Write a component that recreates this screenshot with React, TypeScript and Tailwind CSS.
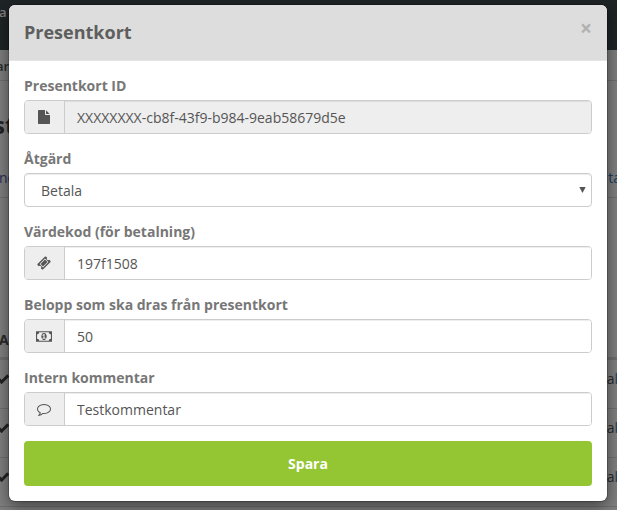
import type { ReactNode } from "react";

interface IconProps {
  d: string;
  viewBox?: string;
  className?: string;
}

interface FieldProps {
  label: string;
  children: ReactNode;
}

interface AddonInputProps {
  icon: ReactNode;
  value: string;
  disabled?: boolean;
}

const FILE =
  "M1152 512v-472q22 14 36 28l408 408q14 14 28 36h-472zm-128 32q0 40 28 68t68 28h544v1056q0 40-28 68t-68 28h-1344q-40 0-68-28t-28-68v-1600q0-40 28-68t68-28h800v544z";
const TICKET =
  "M1024 452l316 316-572 572-316-316zm-211 979l618-618q19-19 19-45t-19-45l-362-362q-18-18-45-18t-45 18l-618 618q-19 19-19 45t19 45l362 362q18 18 45 18t45-18zm889-637l-907 908q-37 37-90.5 37t-90.5-37l-126-125q56-56 56-136t-56-136-136-56-136 56l-125-126q-37-37-37-90.5t37-90.5l907-906q37-37 90.5-37t90.5 37l125 125q-56 56-56 136t56 136 136 56 136-56l126 125q37 37 37 90.5t-37 90.5z";
const MONEY =
  "M768 1152h384v-96h-128v-448h-114l-148 137 77 80q42-37 55-57h2v288h-128v96zm512-256q0 70-21 142t-59.5 134-101.5 101-138 39-138-39-101.5-101-59.5-134-21-142 21-142 59.5-134 101.5-101 138-39 138 39 101.5 101 59.5 134 21 142zm512 256v-512q-106 0-181-75t-75-181h-1152q0 106-75 181t-181 75v512q106 0 181 75t75 181h1152q0-106 75-181t181-75zm128-832v1152q0 26-19 45t-45 19h-1792q-26 0-45-19t-19-45v-1152q0-26 19-45t45-19h1792q26 0 45 19t19 45z";
const COMMENT =
  "M896 384q-204 0-381.5 69.5t-282 187.5-104.5 255q0 112 71.5 213.5t201.5 175.5l87 50-27 96q-24 91-70 172 152-63 275-171l43-38 57 6q69 8 130 8 204 0 381.5-69.5t282-187.5 104.5-255-104.5-255-282-187.5-381.5-69.5zm896 512q0 174-120 321.5t-326 233-450 85.5q-70 0-145-8-198 175-460 242-49 14-114 22h-5q-15 0-27-10.5t-16-27.5v-1q-3-4-.5-12t2-10 4.5-9.5l6-9 7-8.5 8-9q7-8 31-34.5t34.5-38 31-39.5 32.5-51 27-59 26-76q-157-89-247.5-220t-90.5-281q0-174 120-321.5t326-233 450-85.5 450 85.5 326 233 120 321.5z";
const CHECK =
  "M1671 566q0 40-28 68l-724 724-136 136q-28 28-68 28t-68-28l-136-136-362-362q-28-28-28-68t28-68l136-136q28-28 68-28t68 28l294 295 656-657q28-28 68-28t68 28l136 136q28 28 28 68z";

function Icon({ d, viewBox = "0 0 1792 1792", className = "size-3.5" }: IconProps) {
  return (
    <svg viewBox={viewBox} className={className} fill="currentColor" aria-hidden="true">
      <path d={d} />
    </svg>
  );
}

function Field({ label, children }: FieldProps) {
  return (
    <div className="mb-[15px]">
      <div className="mb-[5px] h-[19px] font-bold leading-5 text-[#777]">{label}</div>
      {children}
    </div>
  );
}

function AddonInput({ icon, value, disabled = false }: AddonInputProps) {
  return (
    <div className="flex h-[34px] overflow-hidden rounded border border-[#ccc]">
      <span className="flex w-10 shrink-0 items-center justify-center border-r border-[#ccc] bg-[#eee] pr-0.5">
        {icon}
      </span>
      <input
        defaultValue={value}
        disabled={disabled}
        className="min-w-0 flex-1 bg-white px-3 pt-px shadow-[inset_0_1px_1px_rgba(0,0,0,0.075)] outline-none disabled:bg-[#eee]"
      />
    </div>
  );
}

/* The page behind the dialog */
function Backdrop() {
  return (
    <div className="h-full overflow-hidden bg-white" aria-hidden="true">
      <div className="h-[50px] bg-[#3c484c] pt-0.5 text-[13px] font-semibold leading-5 text-white">
        <span className="-ml-px">a</span>
      </div>
      <div className="-ml-1 h-[31px] border-b border-[#ddd] bg-[#fafafa] text-[13px] font-semibold leading-8">ar</div>
      <div className="-ml-[7px] flex h-[77px] items-center pt-2.5 text-2xl font-bold text-[#444]">st</div>
      <div className="flex h-10 justify-between border-b border-[#ddd] pt-2.5 leading-5 text-[#337ab7]">
        <span className="-ml-px text-[#5a5ab0]">nd</span>
        <span className="-mr-1">ta</span>
      </div>
      <div className="flex h-[162px] items-end border-b-[3px] border-[#ddd] pb-[7px] font-bold leading-5">
        <span className="-ml-px">A</span>
      </div>
      {[0, 1, 2, 3].map((row) => (
        <div key={row} className="flex h-[49px] items-center justify-between border-b border-[#ddd] pb-2.5">
          <Icon d={CHECK} className="-ml-1 size-3.5 text-[#444]" />
          <span className="-mr-px">a<span className="text-[#337ab7]">l</span></span>
        </div>
      ))}
    </div>
  );
}

export default function App() {
  return (
    <div className="relative h-[510px] w-[617px] overflow-hidden font-['Open_Sans','Noto_Sans',sans-serif] text-sm text-[#555]">
      <Backdrop />
      <div className="absolute inset-0 bg-black/50 pl-[9px] pr-[10px] pt-[5px]">
        <div
          role="dialog"
          aria-label="Presentkort"
          className="h-[496px] overflow-hidden rounded-md bg-white shadow-[0_5px_15px_rgba(0,0,0,0.5),0_0_0_1px_rgba(0,0,0,0.2)]"
        >
          <div className="flex h-14 justify-between border-b border-[#e5e5e5] bg-[#ddd] px-[15px] pt-3.5">
            <h4 className="text-lg font-bold leading-[26px] text-[#5e5e5e]">Presentkort</h4>
            <button type="button" aria-label="Close" className="h-4 text-[21px] font-bold leading-[18px] text-[#b1b1b1]">
              ×
            </button>
          </div>
          <form className="p-[15px]">
            <Field label="Presentkort ID">
              <AddonInput icon={<Icon d={FILE} />} value="XXXXXXXX-cb8f-43f9-b984-9eab58679d5e" disabled />
            </Field>
            <Field label="Åtgärd">
              <div className="flex h-[34px] items-center justify-between rounded border border-[#ccc] pl-4 pr-[5px] shadow-[inset_0_1px_1px_rgba(0,0,0,0.075)]">
                <span className="pt-px">Betala</span>
                <svg viewBox="0 0 7 6" className="h-1.5 w-[7px]" fill="currentColor" aria-hidden="true">
                  <path d="M0.3 0h6.4L3.5 6z" />
                </svg>
              </div>
            </Field>
            <Field label="Värdekod (för betalning)">
              <AddonInput icon={<Icon d={TICKET} />} value="197f1508" />
            </Field>
            <Field label="Belopp som ska dras från presentkort">
              <AddonInput icon={<Icon d={MONEY} viewBox="0 0 1920 1792" className="h-[15px] w-4" />} value="50" />
            </Field>
            <Field label="Intern kommentar">
              <AddonInput icon={<Icon d={COMMENT} />} value="Testkommentar" />
            </Field>
            <button type="button" className="h-[45px] w-full rounded bg-[#93c632] font-bold text-white">
              Spara
            </button>
          </form>
        </div>
      </div>
    </div>
  );
}
